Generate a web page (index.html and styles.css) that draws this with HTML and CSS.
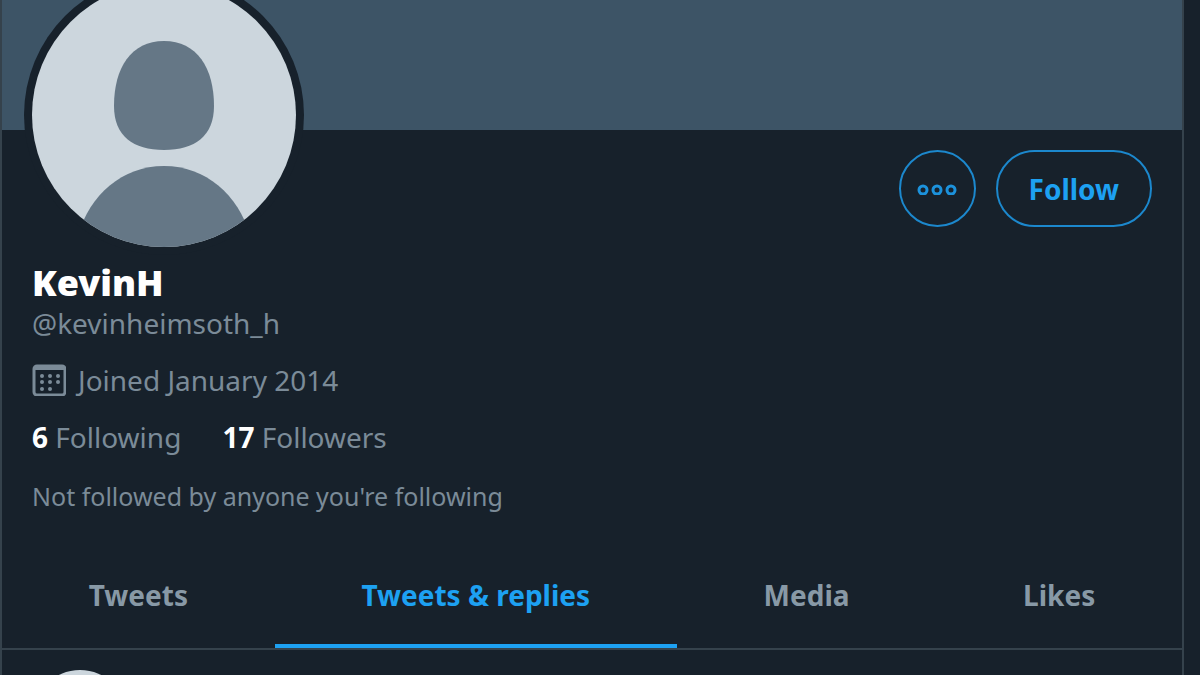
FILE: index.html
```html
<!DOCTYPE html>
<html lang="en">
<head>
<meta charset="utf-8">
<meta name="viewport" content="width=device-width, initial-scale=1">
<title>KevinH (@kevinheimsoth_h)</title>
<link rel="stylesheet" href="styles.css">
</head>
<body>
<main class="column">
  <div class="banner"></div>
  <section class="profile">
    <div class="profile-top">
      <svg class="avatar" viewBox="0 0 280 280" role="img" aria-label="Profile picture">
        <defs><clipPath id="face"><circle cx="140" cy="140" r="132"/></clipPath></defs>
        <circle class="ring" cx="140" cy="140" r="140"/>
        <circle class="disc" cx="140" cy="140" r="132"/>
        <g class="person" clip-path="url(#face)">
          <path d="M140 66C173 66 190 93 190 131C190 161 171 175 140 175C109 175 90 161 90 131C90 93 107 66 140 66Z"/>
          <path d="M54 260C66 220 98 191 140 191S214 220 226 260V280H54Z"/>
        </g>
      </svg>
      <div class="actions">
        <button class="pill more" type="button" aria-label="More">
          <svg class="dots" viewBox="0 0 40 12" aria-hidden="true"><circle cx="6" cy="7" r="4"/><circle cx="20" cy="7" r="4"/><circle cx="34" cy="7" r="4"/></svg>
        </button>
        <button class="pill follow" type="button">Follow</button>
      </div>
    </div>
    <h1 class="name">KevinH</h1>
    <p class="handle">@kevinheimsoth_h</p>
    <p class="joined">
      <svg class="calendar" viewBox="0 0 34 32" aria-hidden="true">
        <rect class="frame" x="2" y="2" width="31" height="29" rx="3"/>
        <path d="M2 5Q2 2 5 2H30Q33 2 33 5V6H2Z"/>
        <g><circle cx="10" cy="12" r="2"/><circle cx="18" cy="12" r="2"/><circle cx="26" cy="12" r="2"/><circle cx="10" cy="18" r="2"/><circle cx="18" cy="18" r="2"/><circle cx="26" cy="18" r="2"/><circle cx="10" cy="25" r="2"/><circle cx="18" cy="25" r="2"/></g>
      </svg>
      <span>Joined January 2014</span>
    </p>
    <div class="stats">
      <a href="#following"><strong>6</strong> Following</a>
      <a href="#followers"><strong>17</strong> Followers</a>
    </div>
    <p class="note">Not followed by anyone you're following</p>
  </section>
  <nav class="tabs" aria-label="Profile timelines">
    <a class="tab" href="#tweets">Tweets</a>
    <a class="tab active" href="#replies" aria-current="page">Tweets &amp; replies</a>
    <a class="tab" href="#media">Media</a>
    <a class="tab" href="#likes">Likes</a>
  </nav>
  <article class="tweet"><div class="tweet-avatar"></div></article>
</main>
</body>
</html>
```
FILE: styles.css
```css
:root {
  --bg: #17212b;
  --line: #35424c;
  --muted: #7b8b98;
  --blue: #1da1f2;
}
* { box-sizing: border-box; }
body {
  margin: 0;
  height: 100vh;
  overflow: hidden;
  background: var(--bg);
  color: var(--muted);
  font: 28px/40px "Segoe UI", "Noto Sans", sans-serif;
}
h1, p { margin: 0; }
a { color: inherit; text-decoration: none; }
.column {
  margin-right: 16px;
  min-height: 100vh;
  border: solid var(--line);
  border-width: 0 2px;
}
.banner { height: 130px; background: #3d5466; }
.profile { padding: 0 30px; }
.profile-top {
  display: flex;
  justify-content: space-between;
  align-items: flex-start;
}
.avatar {
  display: block;
  width: 280px;
  height: 280px;
  margin: -155px 0 8px -8px;
}
.ring { fill: var(--bg); }
.disc { fill: #ccd6dd; }
.person { fill: #657786; }
.actions { display: flex; gap: 20px; padding-top: 20px; }
.pill {
  display: flex;
  align-items: center;
  justify-content: center;
  height: 77px;
  padding: 0 31px;
  border: 2px solid #1c88cd;
  border-radius: 40px;
  background: transparent;
  color: var(--blue);
  font: inherit;
  font-weight: 700;
}
.more { width: 77px; padding: 0; }
.dots { width: 40px; height: 12px; fill: none; stroke: #1c92dc; stroke-width: 3; }
.name { color: #fff; font-size: 36px; font-weight: 900; line-height: 40px; }
.joined { display: flex; align-items: center; gap: 12px; margin-top: 17px; }
.calendar { width: 34px; height: 32px; fill: var(--muted); }
.frame { fill: none; stroke: var(--muted); stroke-width: 3; }
.stats { display: flex; gap: 41px; margin-top: 17px; }
.stats strong { color: #fff; }
.note { margin-top: 19px; font-size: 25px; }
.tabs {
  display: flex;
  margin-top: 26px;
  border-bottom: 2px solid var(--line);
}
.tab {
  flex: 1 1 auto;
  padding: 33px 20px 29px;
  border-bottom: 4px solid transparent;
  color: #8899a6;
  font-weight: 700;
  text-align: center;
}
.active { color: var(--blue); border-color: var(--blue); }
.tweet { height: 25px; padding: 20px 30px 0; overflow: hidden; }
.tweet-avatar { width: 96px; height: 96px; border-radius: 50%; background: #ccd6dd; }
```
